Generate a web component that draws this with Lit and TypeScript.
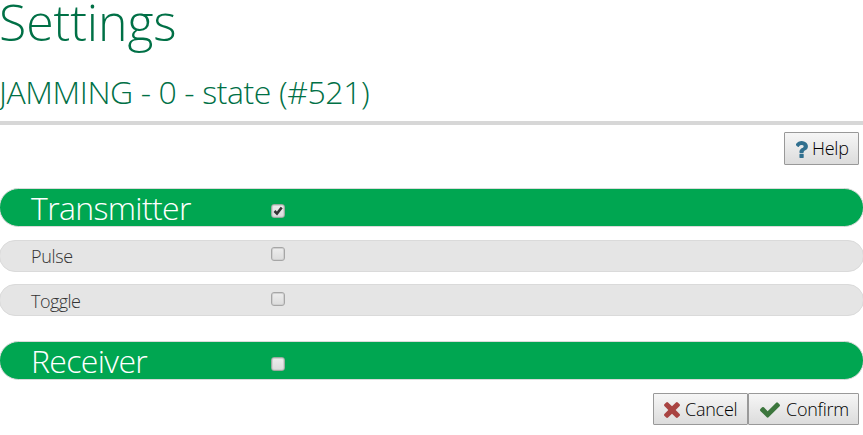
import { LitElement, html, css, svg } from "lit";
import { customElement, property } from "lit/decorators.js";
import { classMap } from "lit/directives/class-map.js";

const icons: Record<string, string> = {
  help: "M1088 1256v240q0 16-12 28t-28 12h-240q-16 0-28-12t-12-28v-240q0-16 12-28t28-12h240q16 0 28 12t12 28zm316-600q0 54-15.500 101t-35 76.500-55 59.500-57.500 43.500-61 35.500q-41 23-68.500 65t-27.500 67q0 17-12 32.500t-28 15.500h-240q-15 0-25.500-18.500t-10.500-37.500v-45q0-83 65-156.500t143-108.500q59-27 84-56t25-76q0-42-46.500-74t-107.500-32q-65 0-108 29-35 25-107 115-13 16-31 16-12 0-25-8l-164-125q-13-10-15.500-25t5.500-28q160-266 464-266 80 0 161 31t146 83 106 127.500 41 158.500z",
  cancel: "M1490 1322q0 40-28 68l-136 136q-28 28-68 28t-68-28l-294-294-294 294q-28 28-68 28t-68-28l-136-136q-28-28-28-68t28-68l294-294-294-294q-28-28-28-68t28-68l136-136q28-28 68-28t68 28l294 294 294-294q28-28 68-28t68 28l136 136q28 28 28 68t-28 68l-294 294 294 294q28 28 28 68z",
  confirm: "M1671 566q0 40-28 68l-724 724-136 136q-28 28-68 28t-68-28l-136-136-362-362q-28-28-28-68t28-68l136-136q28-28 68-28t68 28l294 295 656-657q28-28 68-28t68 28l136 136q28 28 28 68z",
};
const boxes: Record<string, string> = {
  help: "512 256 896 1280",
  cancel: "302 366 1188 1188",
  confirm: "121 334 1550 1188",
};

@customElement("tool-button")
export class ToolButton extends LitElement {
  @property() kind = "help";
  @property() label = "";
  static styles = css`
    :host { display: block; }
    .button {
      display: flex; align-items: center; box-sizing: border-box;
      width: 75px; height: 33px; margin: 0; padding: 0 0 0 10px;
      border: 1px solid #999; border-radius: 1px;
      background: linear-gradient(#f6f6f6, #dcdcdc);
      color: #000; font: 300 18px/31px "Open Sans", sans-serif; white-space: nowrap;
      letter-spacing: -0.250px;
    }
    .cancel { width: 95px; height: 32px; }
    .confirm { width: 111px; height: 32px; }
    .icon { display: block; flex: none; width: 12px; height: 17px; margin: 1px 4px 0 1px; fill: #31708f; }
    .cancel .icon { width: 16px; height: 16px; margin: 2px 5px 0 0; fill: #a94442; }
    .confirm .icon { width: 20px; height: 16px; margin: 2px 6px 0 1px; fill: #3c763d; }
  `;
  render() {
    return html`<button class=${classMap({ button: true, [this.kind]: true })}>
      <svg class="icon" viewBox=${boxes[this.kind]}>${svg`<path d=${icons[this.kind]}></path>`}</svg><span>${this.label}</span>
    </button>`;
  }
}

@customElement("setting-row")
export class SettingRow extends LitElement {
  @property() label = "";
  @property({ type: Boolean }) heading = false;
  @property({ type: Boolean }) checked = false;
  @property({ type: Boolean }) low = false;
  static styles = css`
    :host { display: block; }
    .row {
      display: flex; align-items: flex-start; box-sizing: border-box; height: 32px;
      padding-left: 31px; border: 1px solid #dadada; border-radius: 20px;
      background: #e5e5e5; color: #333; font: 300 18px/30px "Open Sans", sans-serif;
      letter-spacing: -0.350px;
    }
    .heading { height: 39px; background: #00a651; color: #fff; font-size: 32px; line-height: 37px; letter-spacing: -0.650px; }
    .low { padding-top: 1px; letter-spacing: -0.550px; }
    .label { width: 240px; }
    .box {
      box-sizing: border-box; width: 14px; height: 14px; margin-top: 6px;
      border: 1px solid #a6a6a6; border-radius: 3px;
      background: linear-gradient(#ededed, #dcdcdc); box-shadow: inset 0 0 0 1px #d0d0d0;
    }
    .heading .box { margin-top: 15px; border-color: #9caaa1; }
    .mark { display: block; width: 12px; height: 12px; fill: none; stroke: #333; stroke-width: 2.600; }
  `;
  render() {
    return html`<div class=${classMap({ row: true, heading: this.heading, low: this.low })}>
      <span class="label">${this.label}</span>
      <span class="box" role="checkbox" aria-checked=${this.checked ? "true" : "false"}>
        ${this.checked ? html`<svg class="mark" viewBox="0 0 12 12"><path d="M2.500 6l2.500 2.600L9.700 2.500"></path></svg>` : ""}
      </span>
    </div>`;
  }
}

@customElement("app-root")
export class AppRoot extends LitElement {
  static styles = css`
    :host { display: block; height: 435px; overflow: hidden; background: #fff; font-family: "Open Sans", sans-serif; }
    .title, .subtitle { margin: 0; color: #007046; font-weight: 300; white-space: nowrap; }
    .title { height: 69px; font-size: 50px; line-height: 44px; text-indent: -1px; letter-spacing: -0.100px; }
    .subtitle { height: 52px; font-size: 32px; line-height: 46px; border-bottom: 4px solid #d7d7d7; letter-spacing: -0.400px; text-indent: -1px; }
    .tools { display: flex; justify-content: flex-end; padding: 7px 4px 0 0; }
    .list { display: grid; row-gap: 12px; margin: 23px -1px 0; }
    .first { margin-bottom: 1px; }
    .last { margin-top: 13px; }
    .actions { padding-top: 13px; }
  `;
  render() {
    return html`
      <h1 class="title">Settings</h1>
      <h2 class="subtitle">JAMMING - 0 - state (#521)</h2>
      <div class="tools"><tool-button kind="help" label="Help"></tool-button></div>
      <div class="list">
        <setting-row class="first" label="Transmitter" heading checked></setting-row>
        <setting-row label="Pulse"></setting-row>
        <setting-row label="Toggle" low></setting-row>
        <setting-row class="last" label="Receiver" heading></setting-row>
      </div>
      <div class="tools actions">
        <tool-button kind="cancel" label="Cancel"></tool-button>
        <tool-button kind="confirm" label="Confirm"></tool-button>
      </div>`;
  }
}
